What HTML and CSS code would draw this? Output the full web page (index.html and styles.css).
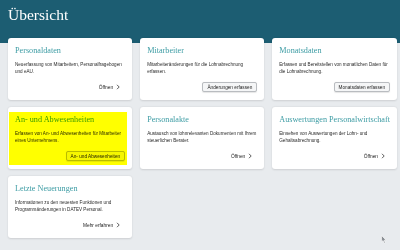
FILE: index.html
```html
<!DOCTYPE html>
<html>
<head>
  <meta charset="utf-8">
  <title>Übersicht</title>
  <link rel="stylesheet" href="styles.css">
</head>
<body>
  <div class="page">
    <div class="header">
      <h1>Übersicht</h1>
    </div>

    <div class="tiles">
      <div class="tile">
        <h2>Personaldaten</h2>
        <p>Neuerfassung von Mitarbeitern, Personalfragebogen und eAU.</p>
        <div class="tile-footer">
          <a class="link">Öffnen <svg width="4" height="6" viewBox="0 0 4 6"><path d="M1 0.8 L3.2 3 L1 5.2" fill="none" stroke="#333" stroke-width="0.8"/></svg></a>
        </div>
      </div>

      <div class="tile">
        <h2>Mitarbeiter</h2>
        <p>Mitarbeiteränderungen für die Lohnabrechnung erfassen.</p>
        <div class="tile-footer">
          <button class="btn">Änderungen erfassen</button>
        </div>
      </div>

      <div class="tile">
        <h2>Monatsdaten</h2>
        <p>Erfassen und Bereitstellen von monatlichen Daten für die Lohnabrechnung.</p>
        <div class="tile-footer">
          <button class="btn">Monatsdaten erfassen</button>
        </div>
      </div>

      <div class="tile highlight">
        <h2>An- und Abwesenheiten</h2>
        <p>Erfassen von An- und Abwesenheiten für Mitarbeiter eines Unternehmens.</p>
        <div class="tile-footer">
          <button class="btn">An- und Abwesenheiten</button>
        </div>
      </div>

      <div class="tile">
        <h2>Personalakte</h2>
        <p>Austausch von lohnrelevanten Dokumenten mit Ihrem steuerlichen Berater.</p>
        <div class="tile-footer">
          <a class="link">Öffnen <svg width="4" height="6" viewBox="0 0 4 6"><path d="M1 0.8 L3.2 3 L1 5.2" fill="none" stroke="#333" stroke-width="0.8"/></svg></a>
        </div>
      </div>

      <div class="tile">
        <h2>Auswertungen Personalwirtschaft</h2>
        <p>Einsehen von Auswertungen der Lohn- und Gehaltsabrechnung.</p>
        <div class="tile-footer">
          <a class="link">Öffnen <svg width="4" height="6" viewBox="0 0 4 6"><path d="M1 0.8 L3.2 3 L1 5.2" fill="none" stroke="#333" stroke-width="0.8"/></svg></a>
        </div>
      </div>

      <div class="tile">
        <h2>Letzte Neuerungen</h2>
        <p>Informationen zu den neuesten Funktionen und Programmänderungen in DATEV Personal.</p>
        <div class="tile-footer">
          <a class="link">Mehr erfahren <svg width="4" height="6" viewBox="0 0 4 6"><path d="M1 0.8 L3.2 3 L1 5.2" fill="none" stroke="#333" stroke-width="0.8"/></svg></a>
        </div>
      </div>
    </div>

    <svg class="cursor" width="7" height="9" viewBox="0 0 7 9">
      <path d="M0.5 0.5 L0.5 7 L2 5.6 L3.3 8.3 L4.3 7.8 L3.1 5.2 L5.2 5.2 Z" fill="#8a8f94" stroke="#fff" stroke-width="0.6"/>
    </svg>
  </div>
</body>
</html>
```

FILE: styles.css
```css
body {
  margin: 0;
  font-family: "Liberation Sans", Arial, sans-serif;
  color: #2b2b2b;
}

.page {
  position: relative;
  width: 400px;
  height: 250px;
  overflow: hidden;
  background: linear-gradient(#1c5d72 0, #1c5d72 43px, #e8ebee 43px);
}

.header {
  height: 38px;
  padding: 0 8px;
  box-sizing: border-box;
}

.header h1 {
  margin: 0;
  padding-top: 6px;
  font-family: "Liberation Serif", "Times New Roman", serif;
  font-weight: normal;
  font-size: 15.5px;
  line-height: 18px;
  color: #ffffff;
}

.tiles {
  display: grid;
  grid-template-columns: repeat(3, 1fr);
  gap: 7px 8px;
  padding: 0 3px 0 8px;
}

.tile {
  position: relative;
  display: flex;
  flex-direction: column;
  background: #ffffff;
  border-radius: 3px;
  box-shadow: 0 0.5px 2px rgba(0, 0, 0, 0.12);
  padding: 7px 7px 8px 7px;
  min-height: 62px;
  box-sizing: border-box;
}

.tile h2 {
  margin: 0 0 5px 0;
  font-family: "Liberation Serif", "Times New Roman", serif;
  font-weight: normal;
  font-size: 8.2px;
  line-height: 11px;
  color: #3d9ca4;
  white-space: nowrap;
}

.tile p {
  margin: 0;
  font-size: 4.6px;
  line-height: 7px;
  color: #2b2b2b;
}

.tile-footer {
  margin-top: auto;
  padding-top: 6px;
  display: flex;
  justify-content: flex-end;
}

.btn {
  font-family: "Liberation Sans", Arial, sans-serif;
  font-size: 4.7px;
  height: 10px;
  padding: 0 4px;
  margin: 0;
  background: #f5f6f7;
  color: #222;
  border: 0.6px solid #b9bcc0;
  border-radius: 2px;
  box-shadow: 0 0.5px 1px rgba(0, 0, 0, 0.1);
}

.link {
  display: flex;
  align-items: center;
  gap: 3px;
  height: 10px;
  padding-right: 5px;
  font-size: 4.8px;
  color: #222;
}

/* highlighter marking on top of the tile */
.highlight::before {
  content: "";
  position: absolute;
  top: 5px;
  right: 5px;
  bottom: 4px;
  left: 1px;
  background: #ffff00;
  mix-blend-mode: multiply;
  pointer-events: none;
  z-index: 1;
}

.cursor {
  position: absolute;
  left: 381px;
  top: 235px;
}
```
